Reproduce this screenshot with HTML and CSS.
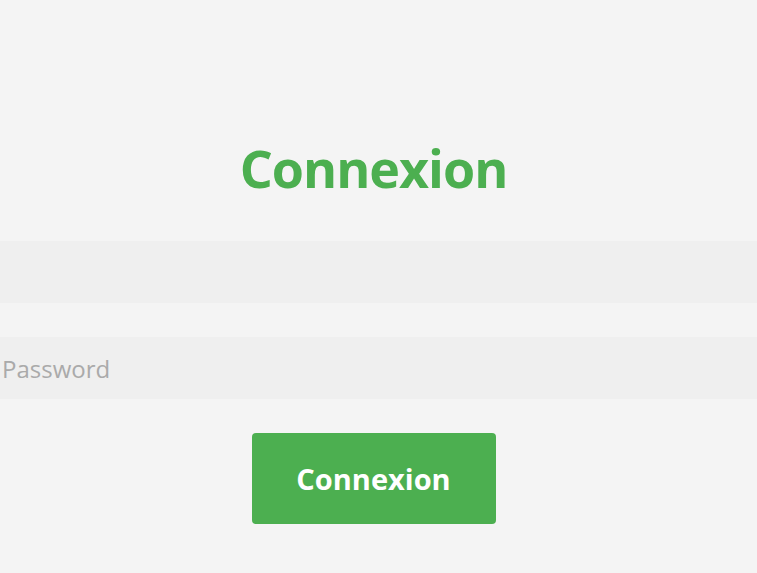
FILE: index.html
```html
<!DOCTYPE html>
<html lang="fr">
<head>
<meta charset="utf-8">
<title>Connexion</title>
<link rel="stylesheet" href="styles.css">
</head>
<body>
<main class="login">
  <h1 class="title">Connexion</h1>
  <form class="form">
    <input class="field" type="text" aria-label="Username">
    <input class="field" type="password" placeholder="Password">
    <button class="btn" type="button">Connexion</button>
  </form>
</main>
</body>
</html>
```
FILE: styles.css
```css
html, body {
  margin: 0;
  padding: 0;
  background: #f4f4f4;
  font-family: "Open Sans", "Noto Sans", sans-serif;
}
.login {
  display: flex;
  flex-direction: column;
  align-items: stretch;
  padding-top: 133px;
}
.title {
  margin: 0;
  padding-right: 10px;
  text-align: center;
  color: #4caf50;
  font-size: 52px;
  font-weight: 700;
  letter-spacing: -1px;
  line-height: 70px;
}
.form {
  display: flex;
  flex-direction: column;
  align-items: stretch;
  margin-top: 38px;
}
.field {
  box-sizing: border-box;
  height: 62px;
  margin: 0 0 34px;
  border: none;
  outline: none;
  background: #efefef;
  padding: 0 2px;
  font-family: "Open Sans", "Noto Sans", sans-serif;
  font-size: 24px;
  color: #333;
}
.field::placeholder {
  color: #aaaaaa;
}
.btn {
  align-self: center;
  width: 244px;
  height: 91px;
  margin: 0 10px 0 0;
  border: none;
  border-radius: 4px;
  background: #4caf50;
  color: #fff;
  font-family: "Open Sans", "Noto Sans", sans-serif;
  font-size: 29px;
  font-weight: 700;
  cursor: pointer;
}
```
